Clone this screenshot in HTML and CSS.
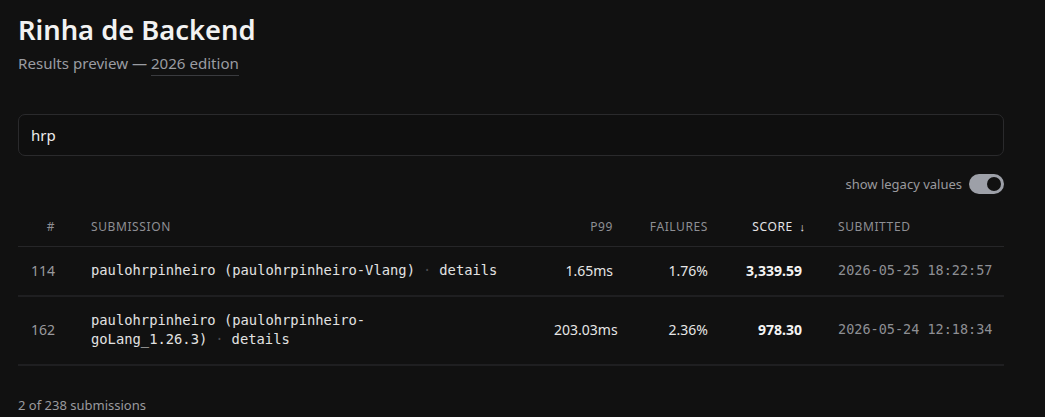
FILE: index.html
```html
<!DOCTYPE html>
<html lang="en">
<head>
<meta charset="utf-8">
<title>Rinha de Backend</title>
<link rel="stylesheet" href="styles.css">
</head>
<body>
<main class="page">
  <header class="head">
    <h1 class="title">Rinha de Backend</h1>
    <p class="subtitle">Results preview — <a class="edition" href="#">2026 edition</a></p>
  </header>

  <div class="search">
    <input class="search-input" type="text" value="hrp">
  </div>

  <div class="options">
    <span class="opt-label">show legacy values</span>
    <span class="toggle"><span class="knob"></span></span>
  </div>

  <table class="results">
    <thead>
      <tr>
        <th class="num w-rank">#</th>
        <th class="w-sub">Submission</th>
        <th class="num w-p99">P99</th>
        <th class="num w-fail">Failures</th>
        <th class="num sorted w-score">Score <span class="arrow">↓</span></th>
        <th class="w-date">Submitted</th>
      </tr>
    </thead>
    <tbody>
      <tr>
        <td class="num rank">114</td>
        <td class="sub">paulohrpinheiro (paulohrpinheiro-Vlang)<span class="dot">·</span><a class="details" href="#">details</a></td>
        <td class="num val">1.65ms</td>
        <td class="num val">1.76%</td>
        <td class="num score">3,339.59</td>
        <td class="date">2026-05-25 18:22:57</td>
      </tr>
      <tr>
        <td class="num rank">162</td>
        <td class="sub">paulohrpinheiro (paulohrpinheiro-<br>goLang_1.26.3)<span class="dot">·</span><a class="details" href="#">details</a></td>
        <td class="num val">203.03ms</td>
        <td class="num val">2.36%</td>
        <td class="num score">978.30</td>
        <td class="date">2026-05-24 12:18:34</td>
      </tr>
    </tbody>
  </table>

  <p class="count">2 of 238 submissions</p>
</main>
</body>
</html>
```

FILE: styles.css
```css
html, body {
  margin: 0;
  background: #111111;
}
body {
  font-family: "Noto Sans", "Open Sans", sans-serif;
  color: #e6e6e6;
}
.page {
  padding: 12px 41px 0 18px;
}
.head {
  margin-bottom: 41px;
}
.title {
  margin: 0;
  font-size: 27.3px;
  font-weight: 600;
  line-height: 36px;
  color: #f2f2f2;
}
.subtitle {
  margin: 5px 0 0;
  font-size: 15.1px;
  line-height: 20px;
  color: #9a9ca2;
}
.edition {
  color: #9a9ca2;
  text-decoration: none;
  border-bottom: 1px solid #3a3b3f;
  padding-bottom: 2px;
}
.search-input {
  display: block;
  box-sizing: border-box;
  width: 100%;
  height: 42px;
  padding: 0 12px;
  background: #0f0f0f;
  border: 1px solid #2a2a2c;
  border-radius: 7px;
  font-family: "Noto Sans", sans-serif;
  font-size: 15px;
  color: #ececec;
  outline: none;
}
.options {
  display: flex;
  justify-content: flex-end;
  align-items: center;
  gap: 7px;
  margin-top: 18px;
}
.opt-label {
  font-size: 13px;
  color: #9a9a9e;
}
.toggle {
  display: flex;
  align-items: center;
  justify-content: flex-end;
  box-sizing: border-box;
  width: 35px;
  height: 20px;
  padding: 0 3px;
  border-radius: 10px;
  background: #9da0a8;
}
.knob {
  width: 14px;
  height: 14px;
  border-radius: 50%;
  background: #111111;
}
.results {
  width: 100%;
  margin-top: 8px;
  border-collapse: collapse;
  table-layout: fixed;
}
th, td {
  box-sizing: border-box;
  padding: 14px 18px;
  text-align: left;
  vertical-align: middle;
}
th:first-child, td:first-child { padding-left: 0; }
th:last-child, td:last-child { padding-right: 0; }
.w-rank { width: 55px; }
.w-sub { width: 463px; }
.w-p99 { width: 95px; }
.w-fail { width: 95px; }
.w-score { width: 94px; }
.w-date { width: 184px; }
th {
  font-size: 12px;
  font-weight: 400;
  line-height: 17px;
  letter-spacing: 0.6px;
  text-transform: uppercase;
  color: #8e8f94;
  padding-top: 16px;
  padding-bottom: 11px;
  border-bottom: 1px solid #262628;
}
th.sorted {
  color: #e4e4e6;
  padding-right: 15px;
}
.arrow {
  display: inline-block;
  margin-left: 3px;
  font-size: 11px;
  letter-spacing: 0;
}
td {
  font-size: 14px;
  line-height: 19.5px;
  border-bottom: 2px solid #1f1f21;
}
.num { text-align: right; }
.rank {
  color: #9a9a9e;
}
.sub {
  font-family: "DejaVu Sans Mono", monospace;
  font-size: 13.8px;
  color: #e2e2e2;
}
.dot {
  color: #4a4a4e;
  margin: 0 8px;
}
.details {
  color: #e2e2e2;
  text-decoration: none;
}
.val {
  color: #e6e6e6;
}
.score {
  font-weight: 700;
  color: #f4f4f4;
}
.date {
  font-family: "DejaVu Sans Mono", monospace;
  font-size: 13.5px;
  color: #8e8f94;
  white-space: nowrap;
}
.count {
  margin: 30px 0 0;
  font-size: 13px;
  color: #9a9a9e;
}
```
